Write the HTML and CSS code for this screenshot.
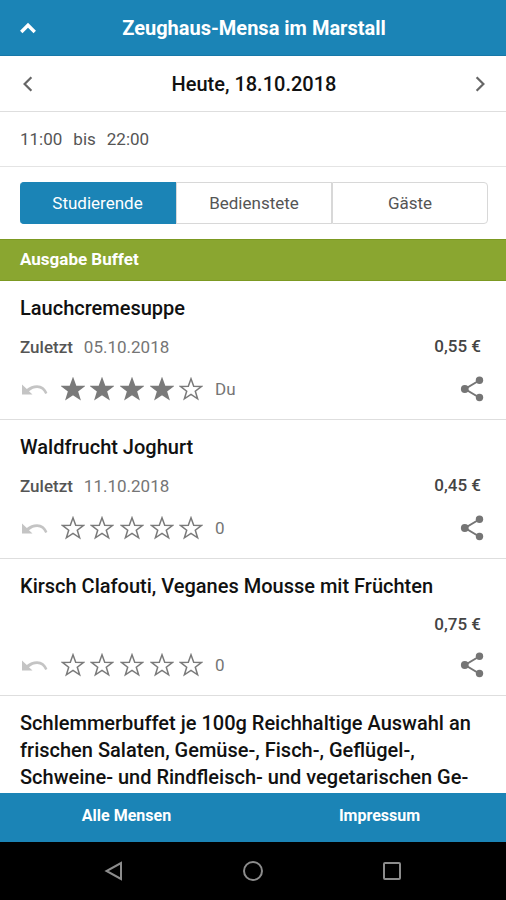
FILE: index.html
```html
<!DOCTYPE html>
<html lang="de">
<head>
<meta charset="utf-8">
<meta name="viewport" content="width=device-width, initial-scale=1">
<title>Zeughaus-Mensa im Marstall</title>
<link rel="stylesheet" href="styles.css">
</head>
<body>
<svg class="defs" aria-hidden="true">
  <symbol id="star" viewBox="0 0 24 24"><path d="M12 1.8 14.7 9.2 22.6 9.4 16.3 14.2 18.6 21.8 12 17.3 5.4 21.8 7.7 14.2 1.4 9.4 9.3 9.2Z"/></symbol>
  <symbol id="undo" viewBox="0 0 26 16"><path d="M0 3.500V13.500H10.500L7 10.200C9.400 8.100 12.400 6.900 15.200 6.900 18.900 6.900 21.500 9 23.200 12.900L25.400 12C23.600 7.200 20 4.300 15 4.300 11 4.300 7.600 5.600 4.800 8.100Z"/></symbol>
  <symbol id="share" viewBox="0 0 24 26"><path d="M20 4 5 13 20 22" fill="none" stroke="currentColor" stroke-width="2"/><circle cx="19.500" cy="4.300" r="3.700"/><circle cx="4.800" cy="13" r="3.900"/><circle cx="19.500" cy="21.500" r="3.700"/></symbol>
</svg>
<div class="app">
  <header class="bar">
    <button class="icon-btn" type="button" aria-label="Einklappen"><svg class="chevron up" viewBox="0 0 16 16"><path d="M2 11.500 8 5.500l6 6"/></svg></button>
    <h1 class="bar-title">Zeughaus-Mensa im Marstall</h1>
  </header>
  <main class="content">
    <div class="day">
      <button class="icon-btn" type="button" aria-label="Vorheriger Tag"><svg class="chevron" viewBox="0 0 16 16"><path d="M11 2 5 8l6 6"/></svg></button>
      <h2 class="day-title">Heute, 18.10.2018</h2>
      <button class="icon-btn" type="button" aria-label="Nächster Tag"><svg class="chevron" viewBox="0 0 16 16"><path d="M5 2l6 6-6 6"/></svg></button>
    </div>
    <div class="hours"><span>11:00</span><span>bis</span><span>22:00</span></div>
    <div class="segments">
      <button class="segment active" type="button" aria-pressed="true">Studierende</button>
      <button class="segment" type="button" aria-pressed="false">Bedienstete</button>
      <button class="segment" type="button" aria-pressed="false">Gäste</button>
    </div>
    <h2 class="counter">Ausgabe Buffet</h2>

    <article class="meal">
      <h3 class="meal-title">Lauchcremesuppe</h3>
      <div class="meta"><p class="last"><b>Zuletzt</b><span>05.10.2018</span></p><p class="price">0,55 €</p></div>
      <div class="actions">
        <button class="undo" type="button" aria-label="Zurücksetzen"><svg><use href="#undo"/></svg></button>
        <div class="stars">
          <button class="star on" type="button" aria-label="1 Stern"><svg><use href="#star"/></svg></button>
          <button class="star on" type="button" aria-label="2 Sterne"><svg><use href="#star"/></svg></button>
          <button class="star on" type="button" aria-label="3 Sterne"><svg><use href="#star"/></svg></button>
          <button class="star on" type="button" aria-label="4 Sterne"><svg><use href="#star"/></svg></button>
          <button class="star" type="button" aria-label="5 Sterne"><svg><use href="#star"/></svg></button>
        </div>
        <span class="votes">Du</span>
        <button class="share" type="button" aria-label="Teilen"><svg><use href="#share"/></svg></button>
      </div>
    </article>

    <article class="meal">
      <h3 class="meal-title">Waldfrucht Joghurt</h3>
      <div class="meta"><p class="last"><b>Zuletzt</b><span>11.10.2018</span></p><p class="price">0,45 €</p></div>
      <div class="actions">
        <button class="undo" type="button" aria-label="Zurücksetzen"><svg><use href="#undo"/></svg></button>
        <div class="stars">
          <button class="star" type="button" aria-label="1 Stern"><svg><use href="#star"/></svg></button>
          <button class="star" type="button" aria-label="2 Sterne"><svg><use href="#star"/></svg></button>
          <button class="star" type="button" aria-label="3 Sterne"><svg><use href="#star"/></svg></button>
          <button class="star" type="button" aria-label="4 Sterne"><svg><use href="#star"/></svg></button>
          <button class="star" type="button" aria-label="5 Sterne"><svg><use href="#star"/></svg></button>
        </div>
        <span class="votes">0</span>
        <button class="share" type="button" aria-label="Teilen"><svg><use href="#share"/></svg></button>
      </div>
    </article>

    <article class="meal">
      <h3 class="meal-title">Kirsch Clafouti, Veganes Mousse mit Früchten</h3>
      <div class="meta"><p class="price">0,75 €</p></div>
      <div class="actions">
        <button class="undo" type="button" aria-label="Zurücksetzen"><svg><use href="#undo"/></svg></button>
        <div class="stars">
          <button class="star" type="button" aria-label="1 Stern"><svg><use href="#star"/></svg></button>
          <button class="star" type="button" aria-label="2 Sterne"><svg><use href="#star"/></svg></button>
          <button class="star" type="button" aria-label="3 Sterne"><svg><use href="#star"/></svg></button>
          <button class="star" type="button" aria-label="4 Sterne"><svg><use href="#star"/></svg></button>
          <button class="star" type="button" aria-label="5 Sterne"><svg><use href="#star"/></svg></button>
        </div>
        <span class="votes">0</span>
        <button class="share" type="button" aria-label="Teilen"><svg><use href="#share"/></svg></button>
      </div>
    </article>

    <article class="meal">
      <h3 class="meal-title">Schlemmerbuffet je 100g Reichhaltige Auswahl an frischen Salaten, Gemüse-, Fisch-, Geflügel-, Schweine- und Rindfleisch- und vegetarischen Ge-</h3>
    </article>
  </main>
  <footer class="links">
    <a href="#mensen">Alle Mensen</a>
    <a href="#impressum">Impressum</a>
  </footer>
  <nav class="system" aria-label="System">
    <button type="button" aria-label="Zurück"><svg viewBox="0 0 20 20"><path d="M17 2v16L2.500 10Z"/></svg></button>
    <button type="button" aria-label="Start"><svg viewBox="0 0 20 20"><circle cx="10" cy="10" r="9"/></svg></button>
    <button type="button" aria-label="Übersicht"><svg viewBox="0 0 20 20"><rect x="2" y="2" width="16" height="16" rx="1"/></svg></button>
  </nav>
</div>
</body>
</html>
```

FILE: styles.css
```css
* { box-sizing: border-box; margin: 0; padding: 0; }

body { font-family: Roboto, "Liberation Sans", sans-serif; background: #fff; color: #111; }

button { border: 0; background: none; font: inherit; color: inherit; cursor: pointer; }
svg { display: block; fill: currentColor; }
.defs { display: none; }

.app { display: flex; flex-direction: column; height: 100vh; }

.bar {
  display: grid;
  grid-template-columns: 24px 1fr 24px;
  align-items: center;
  height: 56px;
  padding: 0 14px 0 16px;
  background: #1b84b6;
  border-bottom: 1px solid #1778a8;
  color: #fff;
}
.bar-title { font-size: 20px; font-weight: 700; line-height: 24px; text-align: center; }

.icon-btn { display: grid; place-items: center; width: 24px; height: 24px; }
.chevron { width: 18px; height: 18px; fill: none; stroke: #666; stroke-width: 2; }
.chevron.up { stroke: #fff; stroke-width: 3; }

.content { flex: 1; min-height: 0; overflow: hidden; }

.day {
  display: flex;
  align-items: center;
  justify-content: space-between;
  height: 56px;
  padding: 0 14px 0 16px;
  border-bottom: 1px solid #dedede;
}
.day-title { font-size: 20px; font-weight: 500; line-height: 24px; }

.hours {
  display: flex;
  align-items: center;
  gap: 11px;
  height: 55px;
  padding: 0 20px;
  border-bottom: 1px solid #e4e4e4;
  color: #555;
  font-size: 17px;
}

.segments { display: grid; grid-template-columns: repeat(3, 1fr); padding: 15px 18px 15px 20px; }
.segment {
  height: 42px;
  border: 1px solid #d8d8d8;
  border-left-width: 0;
  color: #555;
  font-size: 17px;
}
.segment:last-child { border-radius: 0 4px 4px 0; }
.segment + .segment { border-left-width: 1px; }
.segment.active { background: #1b84b6; border-color: #1b84b6; border-radius: 4px 0 0 4px; color: #fff; }

.counter {
  height: 42px;
  padding: 0 20px;
  background: #8aa630;
  border: solid #7c9922;
  border-width: 1px 0;
  color: #fff;
  font-size: 17px;
  font-weight: 700;
  line-height: 38px;
}

.meal { padding: 14px 20px; border-bottom: 1px solid #dedede; }
.meal-title { font-size: 20px; font-weight: 500; line-height: 27px; }

.meta { display: flex; align-items: flex-start; margin-top: 13px; padding-right: 5px; }
.last { display: flex; gap: 11px; color: #757575; font-size: 17px; line-height: 24px; }
.last b { color: #555; font-weight: 500; }
.price { margin-left: auto; color: #444; font-size: 17px; font-weight: 500; line-height: 22px; }

.actions { display: flex; align-items: center; height: 32px; margin-top: 14px; }
.undo { padding-left: 2px; color: #c4c4c4; }
.undo svg { width: 26px; height: 16px; }
.stars { display: grid; grid-template-columns: repeat(5, 1fr); width: 148px; margin-left: 10px; }
.star { display: grid; place-items: center; color: #7a7a7a; }
.star svg { width: 24px; height: 24px; fill: none; stroke: currentColor; stroke-width: 1.5; }
.star.on svg { fill: currentColor; }
.votes { margin-left: 9px; color: #757575; font-size: 17px; line-height: 30px; }
.share { margin-left: auto; padding-right: 2px; color: #757575; }
.share svg { width: 24px; height: 26px; }

.links { display: grid; grid-template-columns: 1fr 1fr; height: 49px; background: #1b84b6; }
.links a {
  color: #fff;
  font-size: 16px;
  font-weight: 700;
  line-height: 45px;
  text-align: center;
  text-decoration: none;
}

.system {
  display: grid;
  grid-template-columns: repeat(3, 1fr);
  height: 58px;
  padding: 0 44px;
  background: #000;
}
.system button { display: grid; place-items: center; }
.system svg { width: 20px; height: 20px; fill: none; stroke: #8c8c8c; stroke-width: 2; }
```
